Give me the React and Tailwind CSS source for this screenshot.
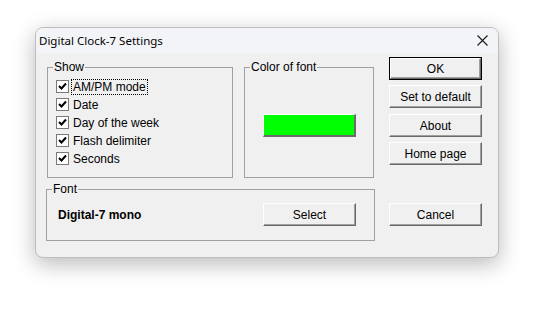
const Check = () => (
    <span className="w-[13px] h-[13px] bg-white border border-[#7a7a7a] flex items-center justify-center shrink-0">
        <svg width="9" height="9" viewBox="0 0 9 9">
            <path d="M1 4 L3.5 6.5 L8 1.5" fill="none" stroke="#000" strokeWidth="2" />
        </svg>
    </span>
);

const Button = ({children, isDefault, className = ''}) => (
    <div className={`${isDefault ? 'border border-black' : ''} ${className}`}>
        <div className="h-full flex items-center justify-center bg-[#f0f0f0] border-t border-l border-t-white border-l-white border-b border-r border-b-[#696969] border-r-[#696969] shadow-[inset_-1px_-1px_0_#a0a0a0] text-[12px] text-black">
            {children}
        </div>
    </div>
);

const Group = ({label, className = '', children}) => (
    <div className={`relative border border-[#a0a0a0] ${className}`}>
        <span className="absolute -top-[8px] left-[5px] px-[1px] bg-[#f0f0f0] text-[12px] leading-[14px] text-black">
            {label}
        </span>
        {children}
    </div>
);

const options = ['AM/PM mode', 'Date', 'Day of the week', 'Flash delimiter', 'Seconds'];

export default function App() {
    return (
        <div className="w-[534px] h-[319px] bg-white pt-[27px] pl-[35px]" style={{fontFamily: '"Liberation Sans", Arial, sans-serif'}}>
            <div className="w-[464px] h-[231px] rounded-[8px] border border-[#bdbdbd] bg-[#f0f0f0] shadow-[0_6px_22px_rgba(0,0,0,0.28)] overflow-hidden flex flex-col">
                <div className="h-[25px] bg-[#f3f4f7] flex items-center justify-between pl-[3px] pr-[10px] shrink-0">
                    <span className="text-[11.5px] text-black" style={{fontFamily: '"Segoe UI", "Noto Sans", sans-serif'}}>Digital Clock-7 Settings</span>
                    <svg width="11" height="11" viewBox="0 0 11 11">
                        <path d="M0.5 0.5 L10.5 10.5 M10.5 0.5 L0.5 10.5" stroke="#1a1a1a" strokeWidth="1.1" />
                    </svg>
                </div>
                <div className="flex flex-row pl-[10px]">
                    <div className="w-[329px] pt-[14px] flex flex-col">
                        <div className="flex flex-row">
                            <Group label="Show" className="ml-[1px] w-[186px] h-[111px]">
                                <div className="flex flex-col pt-[12px] pl-[8px] gap-[5px]">
                                    {options.map((o, i) => (
                                        <div key={o} className="flex items-center h-[13px]">
                                            <Check />
                                            <span className={`ml-[3px] text-[12px] leading-[14px] text-black px-[1px] ${i === 0 ? 'outline outline-1 outline-dotted outline-black' : ''}`}>{o}</span>
                                        </div>
                                    ))}
                                </div>
                            </Group>
                            <Group label="Color of font" className="ml-[11px] w-[130px] h-[111px]">
                                <div className="ml-[18px] mt-[46px] w-[93px] h-[23px] bg-[#00ff00] border-t border-l border-t-white border-l-white border-b-2 border-r-2 border-b-[#6b6b6b] border-r-[#6b6b6b]" />
                            </Group>
                        </div>
                        <Group label="Font" className="mt-[11px] w-[329px] h-[52px]">
                            <div className="flex items-center pl-[11px] pt-[14px]">
                                <span className="text-[12px] font-bold text-black w-[205px]">Digital-7 mono</span>
                                <Button className="w-[93px] h-[23px] -mt-[1px]">Select</Button>
                            </div>
                        </Group>
                    </div>
                    <div className="ml-[14px] pt-[4px] flex flex-col">
                        <Button isDefault className="w-[93px] h-[23px]">OK</Button>
                        <Button className="w-[93px] h-[23px] mt-[5px]">Set to default</Button>
                        <Button className="w-[93px] h-[23px] mt-[6px]">About</Button>
                        <Button className="w-[93px] h-[23px] mt-[5px]">Home page</Button>
                        <Button className="w-[93px] h-[23px] mt-[38px]">Cancel</Button>
                    </div>
                </div>
            </div>
        </div>
    );
}
